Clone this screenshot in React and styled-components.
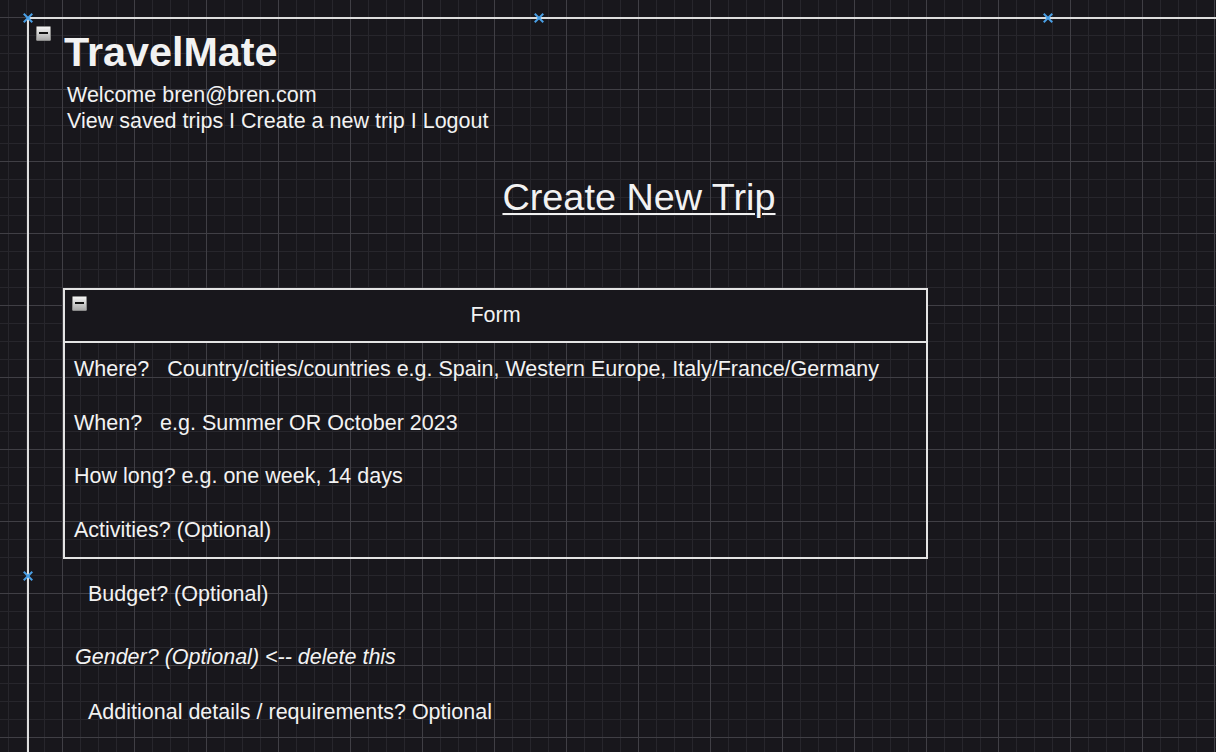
import React from "react";
import styled, { createGlobalStyle } from "styled-components";

const GlobalStyle = createGlobalStyle`
  html, body {
    margin: 0;
    padding: 0;
    background: #18171c;
  }
  body {
    font-family: "Liberation Sans", Arial, sans-serif;
    color: #f2f2f2;
  }
`;

const Canvas = styled.div`
  position: relative;
  width: 1216px;
  height: 752px;
  overflow: hidden;
  background-color: #18171c;
  background-image:
    linear-gradient(to right, #403f45 1px, transparent 1px),
    linear-gradient(to bottom, #403f45 1px, transparent 1px),
    linear-gradient(to right, #27262c 1px, transparent 1px),
    linear-gradient(to bottom, #27262c 1px, transparent 1px);
  background-size: 72px 72px, 72px 72px, 18px 18px, 18px 18px;
  background-position: 62px 17px, 62px 17px, 8px 17px, 8px 17px;
`;

const Swimlane = styled.div`
  position: relative;
  display: flex;
  flex-direction: column;
  align-items: flex-start;
  margin: 17px 0 0 27px;
  width: 1220px;
  height: 760px;
  border-top: 2px solid #dedede;
  border-left: 2px solid #dedede;
`;

const Marker = styled.div`
  position: absolute;
  left: ${(p) => p.x - 5}px;
  top: ${(p) => p.y - 5}px;
  width: 10px;
  height: 10px;
  &::before,
  &::after {
    content: "";
    position: absolute;
    left: 4px;
    top: -1px;
    width: 2px;
    height: 12px;
    background: #4aa0e6;
    transform: rotate(45deg);
  }
  &::after {
    transform: rotate(-45deg);
  }
`;

const Collapse = styled.div`
  position: absolute;
  left: ${(p) => p.x}px;
  top: ${(p) => p.y}px;
  width: 13px;
  height: 13px;
  border: 1px solid #8a8a8a;
  border-radius: 1px;
  background: linear-gradient(to bottom, #f4f4f4, #a8a8a8);
  &::after {
    content: "";
    position: absolute;
    left: 2px;
    right: 2px;
    top: 5px;
    height: 2px;
    background: #111;
  }
`;

const Header = styled.header`
  display: flex;
  flex-direction: column;
  gap: 6px;
  padding: 9px 0 0 35px;
`;

const Title = styled.h1`
  margin: 0;
  font-size: 41.3px;
  line-height: 48px;
  font-weight: 700;
  color: #f2f2f2;
`;

const Info = styled.div`
  padding-left: 3px;
  font-size: 21.5px;
  line-height: 26px;
`;

const PageHeading = styled.h2`
  align-self: stretch;
  margin: 41px 0 0;
  text-align: center;
  font-size: 37.8px;
  line-height: 44px;
  font-weight: 400;
  text-decoration: underline;
  text-decoration-thickness: 2px;
  text-underline-offset: 3px;
`;

const FormBox = styled.section`
  position: relative;
  display: flex;
  flex-direction: column;
  margin: 69px 0 0 34px;
  width: 861px;
  border: 2px solid #e4e4e4;
`;

const FormTitle = styled.div`
  height: 51px;
  line-height: 51px;
  text-align: center;
  font-size: 21.5px;
  background: #18171c;
  border-bottom: 2px solid #e4e4e4;
`;

const FormRow = styled.div`
  height: 53.5px;
  line-height: 53px;
  padding-left: 9px;
  font-size: 21.5px;
  white-space: pre;
`;

const Extra = styled.div`
  margin: ${(p) => p.gap}px 0 0 ${(p) => p.indent}px;
  font-size: 21.5px;
  line-height: 26px;
  font-style: ${(p) => (p.italic ? "italic" : "normal")};
`;

export default function App() {
  return (
    <Canvas>
      <GlobalStyle />
      <Swimlane>
        <Collapse x={7} y={7} />
        <Header>
          <Title>TravelMate</Title>
          <Info>
            Welcome bren@bren.com
            <br />
            View saved trips I Create a new trip I Logout
          </Info>
        </Header>
        <PageHeading>Create New Trip</PageHeading>
        <FormBox>
          <Collapse x={7} y={6} />
          <FormTitle>Form</FormTitle>
          <FormRow>{"Where?   Country/cities/countries e.g. Spain, Western Europe, Italy/France/Germany"}</FormRow>
          <FormRow>{"When?   e.g. Summer OR October 2023"}</FormRow>
          <FormRow>How long? e.g. one week, 14 days</FormRow>
          <FormRow>Activities? (Optional)</FormRow>
        </FormBox>
        <Extra gap={22} indent={59}>Budget? (Optional)</Extra>
        <Extra gap={37} indent={46} italic>
          Gender? (Optional) &lt;-- delete this
        </Extra>
        <Extra gap={29} indent={59}>Additional details / requirements? Optional</Extra>
      </Swimlane>
      <Marker x={28} y={18} />
      <Marker x={539} y={18} />
      <Marker x={1048} y={18} />
      <Marker x={28} y={576} />
    </Canvas>
  );
}
